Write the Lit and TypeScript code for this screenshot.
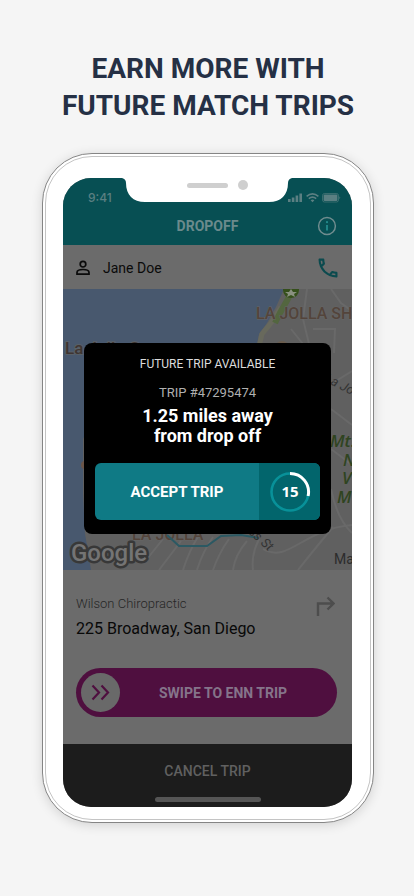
import { LitElement, html, css, svg } from "lit";
import { customElement, property } from "lit/decorators.js";

@customElement("trip-map")
class TripMap extends LitElement {
  static styles = css`
    :host { display: block; height: 281px; background: #606060; overflow: hidden; }
    .map { display: block; width: 100%; height: 100%; }
    .area { font: 500 16px Roboto, sans-serif; fill: #53443b; stroke: #666; stroke-width: 1px; paint-order: stroke; }
    .cove { font: 500 17px Roboto, sans-serif; fill: #3f3532; stroke: #586068; stroke-width: 2px; paint-order: stroke; }
    .road { font: italic 400 13px Roboto, sans-serif; fill: #333; }
    .park { font: italic 600 17px "Open Sans", sans-serif; fill: #2f4420; }
    .town { font: 400 14px Roboto, sans-serif; fill: #2c2c2c; }
    .logo { font: 500 24px Roboto, sans-serif; fill: #747474; stroke: #383838; stroke-width: 5px; stroke-linejoin: round; paint-order: stroke; }
  `;
  render() {
    return html`<svg class="map" viewBox="0 0 289 281" preserveAspectRatio="xMidYMid slice" role="img" aria-label="Map of La Jolla">
      ${svg`
      <path fill="#48586e" d="M0 0H221L213 18L204 34L196 45L193 60L150 90L40 110L20 150V205L22 245L25 262L28 281H0Z"/>
      <path fill="none" stroke="#68695c" stroke-width="5" d="M218 18L208 34L199 45L196 58"/>
      <path fill="none" stroke="#53663f" stroke-width="6" d="M226 8L217 24L212 34"/>
      <circle cx="219" cy="59" r="7" fill="#6b5d4e"/>
      <circle cx="22" cy="176" r="4" fill="#6b5548"/>
      <g fill="none" stroke="#696969" stroke-width="2">
        <path d="M244 0L240 30L246 55"/><path d="M268 0L278 14L289 22"/><path d="M228 40L240 55M250 40H272L271 64"/>
        <path d="M268 95L289 82"/><path d="M268 160L289 176"/><path d="M268 120L289 136"/>
        <path d="M200 260C225 275 240 240 289 236"/><path d="M268 200Q274 230 289 244"/><path d="M235 281Q250 262 270 238"/>
        <path d="M120 281Q126 262 136 246M134 281Q140 262 150 248M150 281Q156 264 166 250M170 281Q172 266 184 252M190 281Q188 266 196 250"/>
        <path d="M84 270L100 250M96 281L118 252"/>
      </g>
      <circle cx="228" cy="1" r="8" fill="#354f1b"/>
      <path fill="#8a9180" d="M228 0L230 3L234 3L231 5L232 8L228 6L224 8L225 5L222 3L226 3Z"/>
      <text class="area" x="193" y="30">LA JOLLA SH</text>
      <text class="cove" x="2" y="65">La Jolla Cove</text>
      <text class="area" x="69" y="251">LA JOLLA</text>
      <path fill="none" stroke="#2b5963" stroke-width="2" d="M104 246L116 257H144L158 247L178 246L196 249"/>
      <text class="road" transform="translate(261 92) rotate(27)">La Jo</text>
      <text class="road" transform="translate(185 244) rotate(42)">ss St</text>
      <text class="park" x="267" y="158">Mt.</text>
      <text class="park" x="280" y="177">N</text>
      <text class="park" x="279" y="195">V</text>
      <text class="park" x="274" y="214">M</text>
      <text class="town" x="271" y="275">Ma</text>
      <text class="logo" x="8" y="272">Google</text>`}
    </svg>`;
  }
}

@customElement("trip-offer")
class TripOffer extends LitElement {
  @property({ type: Number }) seconds = 15;
  static styles = css`
    :host { display: block; background: #000; border-radius: 8px; padding: 13px 11px 14px; color: #fff; text-align: center; font-family: Roboto, sans-serif; }
    .eyebrow { margin: 0; font: 400 12px/16px Roboto, sans-serif; color: #ddd; }
    .number { margin: 12px 0 0; font: 400 13px/18px Roboto, sans-serif; color: #b0b0b0; }
    .distance { margin: 4px 0 0; font: 700 18px/20px Roboto, sans-serif; }
    .accept { display: flex; width: 100%; height: 57px; margin: 17px 0 0; padding: 0; border: 0; border-radius: 6px; overflow: hidden; background: #0f7a85; color: #fff; font: 700 15px/20px Roboto, sans-serif; align-items: stretch; }
    .label { flex: 1; align-self: center; }
    .timer { display: grid; place-items: center; width: 61px; background: #02656c; }
    .ring { width: 42px; height: 42px; }
    .count { font: 700 15px "Noto Sans", sans-serif; fill: #fff; text-anchor: middle; }
  `;
  render() {
    return html`
      <p class="eyebrow">FUTURE TRIP AVAILABLE</p>
      <p class="number">TRIP #47295474</p>
      <p class="distance">1.25 miles away<br />from drop off</p>
      <button class="accept">
        <span class="label">ACCEPT TRIP</span>
        <span class="timer"><svg class="ring" viewBox="0 0 42 42">
          <circle cx="21" cy="21" r="18.5" fill="none" stroke="#089199" stroke-width="2.6"/>
          <path d="M21 2.5A18.5 18.5 0 0 1 39.1 25" fill="none" stroke="#fff" stroke-width="3"/>
          <text class="count" x="21" y="26">${this.seconds}</text>
        </svg></span>
      </button>`;
  }
}

@customElement("app-root")
class AppRoot extends LitElement {
  static styles = css`
    :host { display: block; min-height: 100vh; background: #f5f5f5; font-family: Roboto, sans-serif; }
    * { box-sizing: border-box; }
    .page { display: flex; flex-direction: column; padding: 50px 40px 72px 42px; }
    .title { margin: 0 0 29px; text-align: center; color: #253045; font: 700 28px/37px Roboto, sans-serif; white-space: nowrap; }
    .phone { position: relative; border: 1px solid #858585; border-radius: 50px; background: #fff; padding: 24px 21px 15px 20px; box-shadow: 0 2px 12px rgba(0, 0, 0, 0.14); }
    .phone::before { content: ""; position: absolute; inset: 2px; border: 1px solid #c4c4c4; border-radius: 47px; }
    .screen { position: relative; border-radius: 28px; overflow: hidden; background: #6b6b6b; }
    .notch { position: absolute; top: 0; left: 50%; width: 170px; height: 24px; margin-left: -86px; }
    .notch-shape { display: block; width: 170px; height: 24px; }
    .header { background: #074f53; color: #6f8c8e; }
    .status { display: flex; justify-content: space-between; align-items: center; height: 36px; padding: 4px 11px 0 25px; font: 500 12px/16px Inter, sans-serif; color: #5b7f82; }
    .bar { display: grid; grid-template-columns: 20px 1fr 20px; align-items: center; height: 31px; padding: 2px 15px 9px; }
    .bar-title { grid-column: 2; margin: 0; text-align: center; font: 700 14px/20px Roboto, sans-serif; color: #6b8a8c; }
    .icon-button { display: block; padding: 0; border: 0; background: none; color: inherit; }
    .icon { display: block; }
    .rider { display: flex; align-items: center; height: 44px; padding: 1px 14px 0 13px; color: #0a0a0a; }
    .rider-name { flex: 1; margin-left: 13px; font: 400 14px/20px Roboto, sans-serif; }
    .call { color: #0b4a4e; }
    .trip { display: flex; justify-content: space-between; padding: 24px 17px 0 13px; }
    .place { margin: 0; font: 300 13px/20px Roboto, sans-serif; color: #262626; }
    .address { margin: 3px 0 0; font: 400 16px/24px Roboto, sans-serif; color: #080808; }
    .turn { margin-top: 2px; color: #4d4d4d; }
    .swipe { display: flex; align-items: center; width: calc(100% - 28px); height: 49px; margin: 27px 15px 27px 13px; padding: 5px; border: 0; border-radius: 25px; background: #4f0f3f; color: #85748a; font: 700 14px/20px Roboto, sans-serif; }
    .knob { display: grid; place-items: center; width: 39px; height: 39px; border-radius: 50%; background: #696969; color: #4f0f3f; }
    .swipe-label { flex: 1; padding-right: 6px; }
    .footer { display: flex; flex-direction: column; align-items: center; height: 63px; padding: 17px 0 5px; background: #1c1c1c; }
    .cancel { padding: 0; border: 0; background: none; color: #606060; font: 500 14px/20px Roboto, sans-serif; }
    .home { width: 106px; height: 5px; margin-top: auto; border-radius: 3px; background: #555; }
    .offer { position: absolute; top: 165px; left: 21px; right: 21px; }
  `;
  render() {
    return html`<main class="page">
      <h1 class="title">EARN MORE WITH<br />FUTURE MATCH TRIPS</h1>
      <section class="phone">
        <div class="screen">
          <header class="header">
            <div class="status">
              <span>9:41</span>
              <svg class="icon" width="53" height="12" viewBox="0 0 53 12" fill="currentColor">
                <rect x="0" y="7" width="2.6" height="3"/><rect x="3.8" y="5.5" width="2.6" height="4.5"/><rect x="7.6" y="3.5" width="2.6" height="6.5"/><rect x="11.4" y="1.5" width="2.6" height="8.5"/>
                <g fill="none" stroke="currentColor" stroke-width="1.6"><path d="M18.6 4.4Q24.5-.6 30.4 4.4"/><path d="M20.8 6.7Q24.5 3.6 28.2 6.7"/></g><path d="M22.6 8.2Q24.5 6.8 26.4 8.2L24.5 10.2Z"/>
                <rect x="34.5" y="1.5" width="16" height="8.5" rx="2" fill="none" stroke="currentColor" stroke-width=".6"/><rect x="35.6" y="2.6" width="13.8" height="6.3" rx="1"/><path d="M51.5 4.2Q53 5.7 51.5 7.3Z"/>
              </svg>
            </div>
            <div class="bar">
              <h2 class="bar-title">DROPOFF</h2>
              <button class="icon-button" aria-label="Information"><svg class="icon" width="20" height="20" viewBox="0 0 20 20">
                <circle cx="10" cy="10" r="8.4" fill="none" stroke="currentColor" stroke-width="1.5"/><circle cx="10" cy="6.2" r="1.1" fill="#248a8c"/><path d="M10 9V14.6" stroke="#248a8c" stroke-width="1.8"/>
              </svg></button>
            </div>
          </header>
          <div class="rider">
            <svg class="icon" width="14" height="16" viewBox="0 0 14 16" fill="none" stroke="currentColor" stroke-width="1.7"><circle cx="7" cy="4.2" r="2.8"/><path d="M1 14.2V12.4C1 10.4 4.2 9.5 7 9.5S13 10.4 13 12.4V14.2Z"/></svg>
            <span class="rider-name">Jane Doe</span>
            <button class="icon-button call" aria-label="Call rider"><svg class="icon" width="20" height="20" viewBox="2.5 2.5 19 19" fill="currentColor"><path d="M6.54 5c.06.89.21 1.76.45 2.59l-1.2 1.2c-.41-1.2-.67-2.47-.76-3.79h1.51m9.86 12.02c.85.24 1.72.39 2.6.45v1.49c-1.32-.09-2.59-.35-3.8-.75l1.2-1.19M7.5 3H4c-.55 0-1 .45-1 1 0 9.39 7.61 17 17 17 .55 0 1-.45 1-1v-3.49c0-.55-.45-1-1-1-1.24 0-2.45-.2-3.57-.57a.84.84 0 0 0-.31-.05c-.26 0-.51.1-.71.29l-2.2 2.2a15.15 15.15 0 0 1-6.59-6.59l2.2-2.2c.28-.28.36-.67.25-1.02A11.36 11.36 0 0 1 8.5 4c0-.55-.45-1-1-1z"/></svg></button>
          </div>
          <trip-map></trip-map>
          <div class="trip">
            <div>
              <p class="place">Wilson Chiropractic</p>
              <p class="address">225 Broadway, San Diego</p>
            </div>
            <svg class="icon turn" width="19" height="21" viewBox="0 0 19 21" fill="none" stroke="currentColor" stroke-width="2.4"><path d="M2 20V7.5H16.5M11.5 1.5L17.5 7.5L11.5 13.5"/></svg>
          </div>
          <button class="swipe">
            <span class="knob"><svg class="icon" width="19" height="17" viewBox="0 0 19 17" fill="none" stroke="currentColor" stroke-width="2.2"><path d="M1.5 1.5L8 8.5L1.5 15.5M10.5 1.5L17 8.5L10.5 15.5"/></svg></span>
            <span class="swipe-label">SWIPE TO ENN TRIP</span>
          </button>
          <footer class="footer">
            <button class="cancel">CANCEL TRIP</button>
            <span class="home"></span>
          </footer>
          <div class="notch"><svg class="notch-shape" viewBox="0 0 170 24">
            <path fill="#fff" d="M0 0H170Q166 1 166 5C166 17 159 24 147 24H23C11 24 4 17 4 5Q4 1 0 0Z"/>
            <rect x="65" y="5" width="41" height="5" rx="2.5" fill="#cfcfcf"/><circle cx="121" cy="7" r="5" fill="#cfcfcf"/>
          </svg></div>
          <trip-offer class="offer" .seconds=${15}></trip-offer>
        </div>
      </section>
    </main>`;
  }
}
